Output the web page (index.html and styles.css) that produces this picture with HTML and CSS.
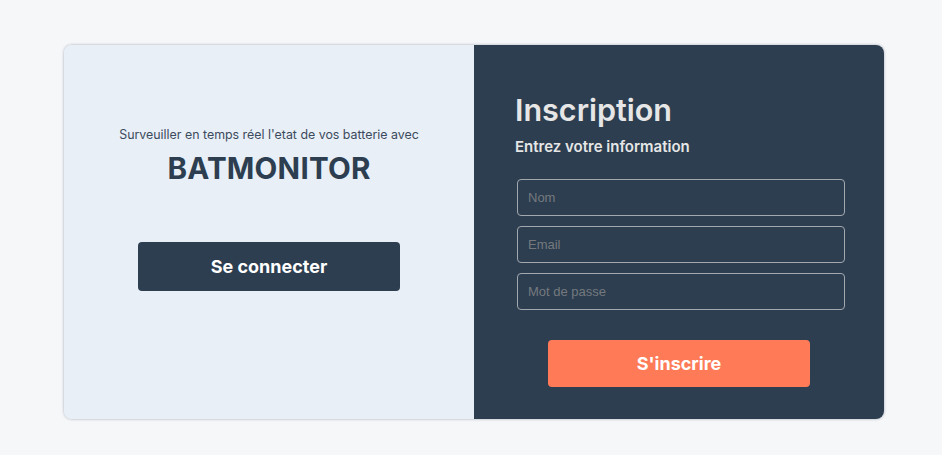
FILE: index.html
```html
<!DOCTYPE html>
<html lang="fr">
<head>
<meta charset="utf-8">
<title>BatMonitor - Inscription</title>
<link rel="stylesheet" href="styles.css">
</head>
<body>
<main class="page">
  <div class="card">
    <section class="left">
      <p class="tagline">Surveuiller en temps réel l'etat de vos batterie avec</p>
      <h1 class="brand">BATMONITOR</h1>
      <button class="btn btn-dark">Se connecter</button>
    </section>
    <section class="right">
      <h2 class="title">Inscription</h2>
      <p class="subtitle">Entrez votre information</p>
      <form class="form">
        <input class="field" type="text" placeholder="Nom">
        <input class="field" type="email" placeholder="Email">
        <input class="field" type="password" placeholder="Mot de passe">
        <button class="btn btn-orange" type="button">S'inscrire</button>
      </form>
    </section>
  </div>
</main>
</body>
</html>
```
FILE: styles.css
```css
* { box-sizing: border-box; }
html, body { margin: 0; padding: 0; }
body {
  background: #f6f7f9;
  font-family: Inter, "Noto Sans", sans-serif;
  width: 942px;
  height: 455px;
}
.page {
  padding: 45px 0 0 64px;
}
.card {
  display: flex;
  width: 820px;
  height: 374px;
  border-radius: 8px;
  overflow: hidden;
  box-shadow: 0 0 3px rgba(40, 60, 90, 0.4);
}
.left {
  width: 410px;
  background: #e8eff7;
  display: flex;
  flex-direction: column;
  align-items: center;
  padding-top: 82px;
}
.tagline {
  margin: 0;
  font-size: 12.4px;
  color: #3b4a5c;
  line-height: 16px;
}
.brand {
  margin: 7px 0 0;
  font-size: 29.6px;
  font-weight: 700;
  color: #2c3e50;
  line-height: 36px;
  letter-spacing: 0.2px;
}
.btn {
  border: none;
  border-radius: 4px;
  color: #fff;
  font-family: Inter, "Noto Sans", sans-serif;
  font-size: 18px;
  font-weight: 700;
  width: 262px;
  cursor: pointer;
}
.btn-dark {
  background: #2c3e50;
  height: 49px;
  margin-top: 56px;
}
.right {
  width: 410px;
  background: #2c3e50;
  padding: 47px 0 0 41px;
}
.title {
  margin: 0;
  font-size: 30.5px;
  font-weight: 600;
  color: #e6e6e6;
  line-height: 36px;
}
.subtitle {
  margin: 10px 0 0;
  font-size: 15px;
  font-weight: 600;
  color: #e6e6e6;
  line-height: 18px;
}
.form {
  display: flex;
  flex-direction: column;
  margin-top: 23px;
  padding-left: 2px;
  gap: 10px;
}
.field {
  width: 328px;
  height: 37px;
  border: 1px solid #a3a8ae;
  border-radius: 4px;
  background: transparent;
  padding: 0 10px;
  font-family: "Liberation Sans", Arial, sans-serif;
  font-size: 13px;
  color: #e6e6e6;
  outline: none;
}
.field::placeholder { color: #75797e; }
.btn-orange {
  background: #ff7b58;
  height: 47px;
  margin: 20px 0 0 31px;
}
```
